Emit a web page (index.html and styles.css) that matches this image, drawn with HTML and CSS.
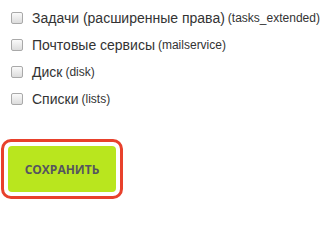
FILE: index.html
```html
<!DOCTYPE html>
<html lang="ru">
<head>
<meta charset="utf-8">
<link rel="stylesheet" href="styles.css">
</head>
<body>
<ul class="scopes">
  <li class="scope"><span class="box"></span><span class="name">Задачи (расширенные права)</span><span class="code">(tasks_extended)</span></li>
  <li class="scope"><span class="box"></span><span class="name">Почтовые сервисы</span><span class="code">(mailservice)</span></li>
  <li class="scope"><span class="box"></span><span class="name">Диск</span><span class="code">(disk)</span></li>
  <li class="scope"><span class="box"></span><span class="name">Списки</span><span class="code">(lists)</span></li>
</ul>
<div class="save-ring"><button class="save">СОХРАНИТЬ</button></div>
</body>
</html>
```
FILE: styles.css
```css
html, body {
  margin: 0;
  padding: 0;
  background: #fff;
}
body {
  font-family: "Liberation Sans", Arial, sans-serif;
  color: #333;
}
.scopes {
  list-style: none;
  margin: 0;
  padding: 4px 0 0 11px;
}
.scope {
  display: flex;
  align-items: center;
  height: 27px;
  white-space: nowrap;
}
.box {
  width: 10px;
  height: 10px;
  border: 1px solid #a9a9a9;
  border-radius: 2px;
  background: linear-gradient(#fafafa, #dcdcdc);
  margin-right: 9px;
  flex: none;
}
.name {
  font-size: 14px;
}
.code {
  font-size: 12px;
  margin-left: 3px;
}
.save-ring {
  display: inline-block;
  margin: 27px 0 0 1px;
  border: 3px solid #e8412c;
  border-radius: 10px;
  padding: 4px;
}
.save {
  display: block;
  width: 108px;
  height: 46px;
  border: none;
  border-radius: 4px;
  background: #b9e61e;
  color: #55555f;
  font-family: "Open Sans", sans-serif;
  font-weight: 700;
  font-size: 12px;
  padding: 0;
}
```
